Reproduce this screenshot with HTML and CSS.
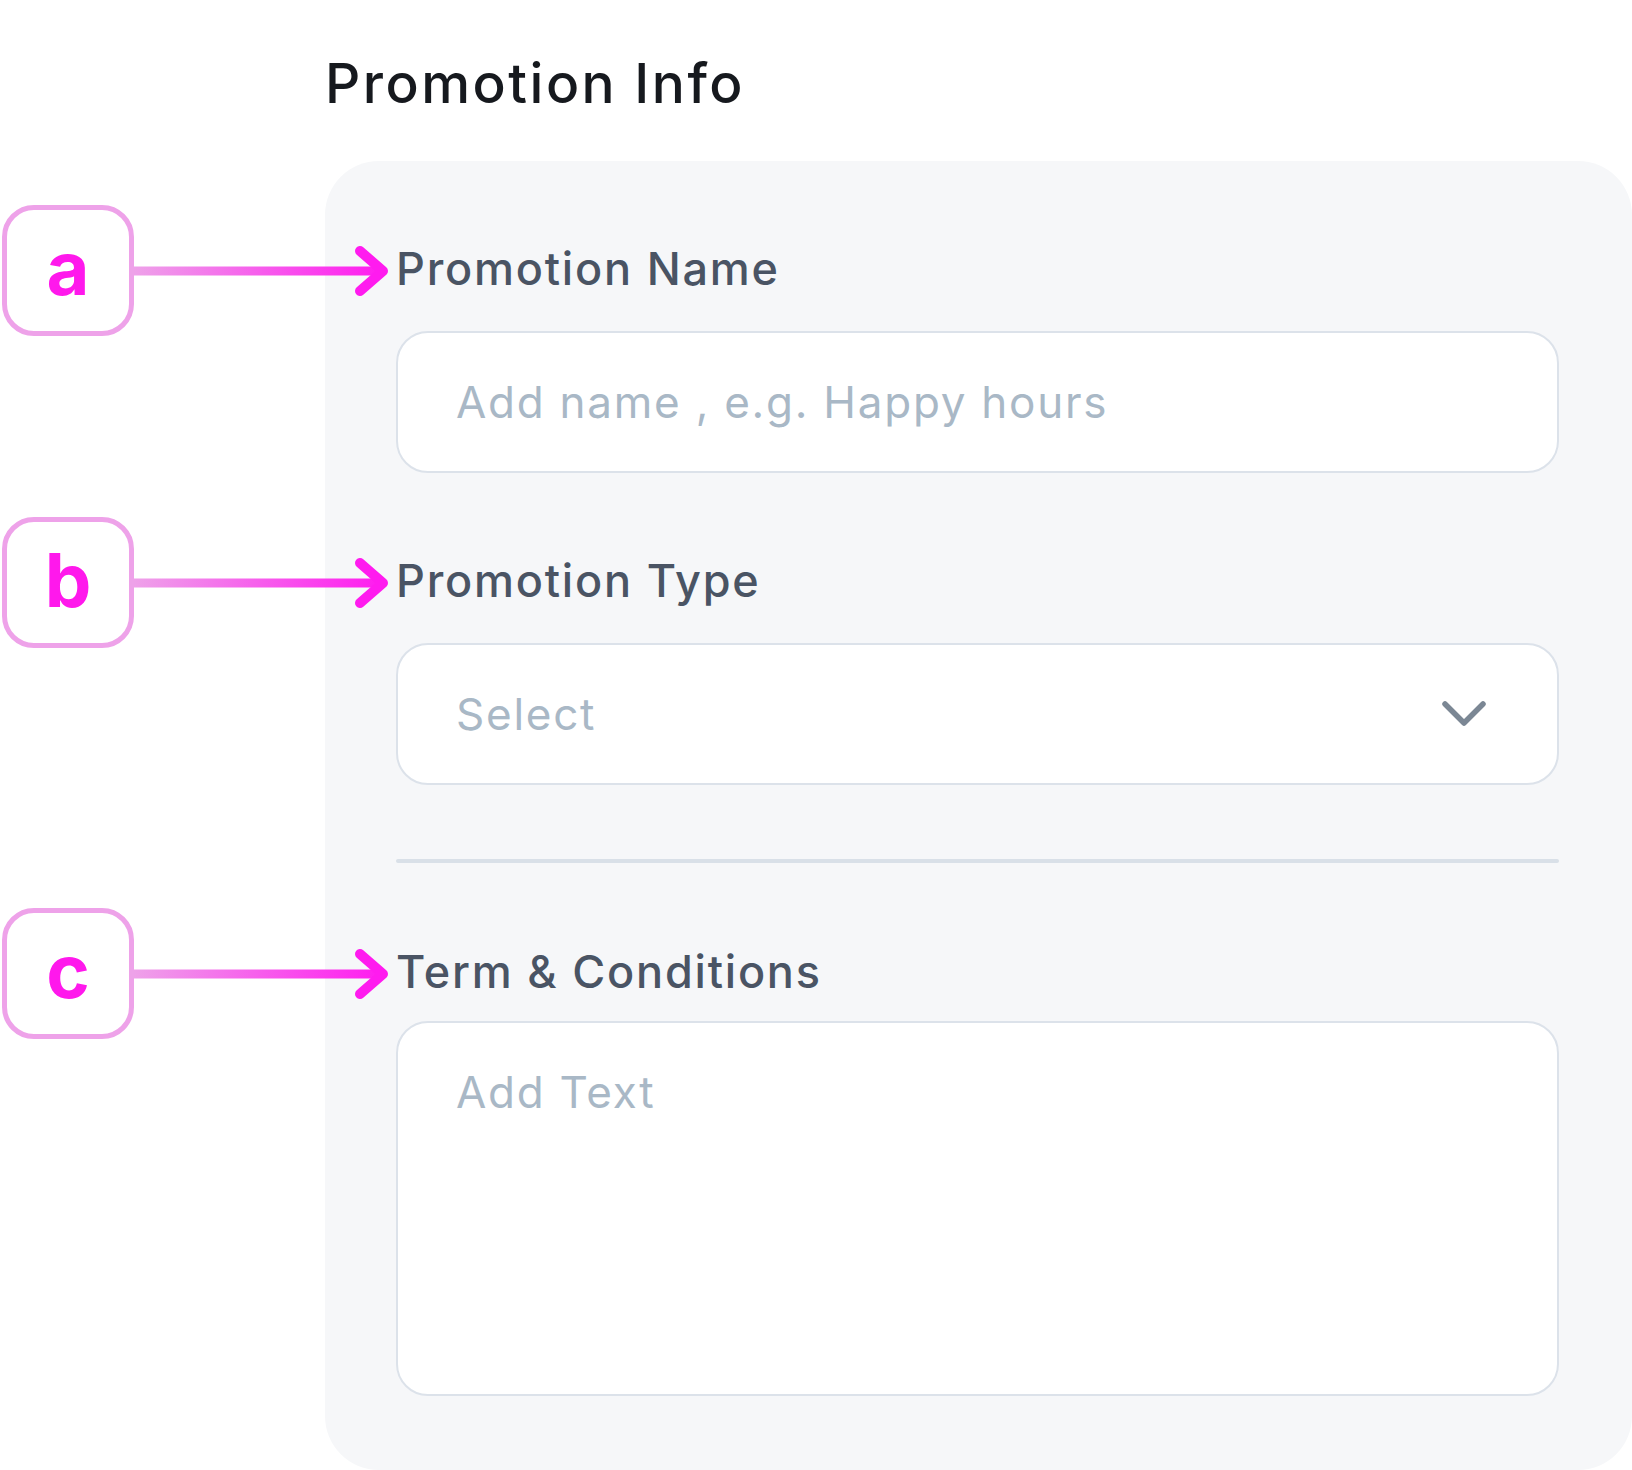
FILE: index.html
```html
<!DOCTYPE html>
<html lang="en">
<head>
<meta charset="utf-8">
<title>Promotion Info</title>
<link rel="stylesheet" href="styles.css">
</head>
<body>
<main class="page">
  <h1 class="title">Promotion Info</h1>
  <section class="panel">
    <div class="field">
      <div class="label-row">
        <div class="callout">
          <span class="callout-box">a</span>
          <svg class="callout-arrow" width="256" height="60" viewBox="0 0 256 60" aria-hidden="true">
            <defs>
              <linearGradient id="ga" gradientUnits="userSpaceOnUse" x1="0" y1="0" x2="250" y2="0">
                <stop offset="0" stop-color="#EEA2E9"/>
                <stop offset="1" stop-color="#FF1BEF"/>
              </linearGradient>
            </defs>
            <rect x="0" y="25.5" width="246" height="9" fill="url(#ga)"/>
            <polyline points="227,10 250,30 227,50" fill="none" stroke="#FF1BEF" stroke-width="10" stroke-linecap="round" stroke-linejoin="round"/>
          </svg>
        </div>
        <label class="label" for="pname">Promotion Name</label>
      </div>
      <input id="pname" class="control" type="text" placeholder="Add name , e.g. Happy hours">
    </div>

    <div class="field">
      <div class="label-row">
        <div class="callout">
          <span class="callout-box">b</span>
          <svg class="callout-arrow" width="256" height="60" viewBox="0 0 256 60" aria-hidden="true">
            <defs>
              <linearGradient id="gb" gradientUnits="userSpaceOnUse" x1="0" y1="0" x2="250" y2="0">
                <stop offset="0" stop-color="#EEA2E9"/>
                <stop offset="1" stop-color="#FF1BEF"/>
              </linearGradient>
            </defs>
            <rect x="0" y="25.5" width="246" height="9" fill="url(#gb)"/>
            <polyline points="227,10 250,30 227,50" fill="none" stroke="#FF1BEF" stroke-width="10" stroke-linecap="round" stroke-linejoin="round"/>
          </svg>
        </div>
        <span class="label">Promotion Type</span>
      </div>
      <div class="control select">
        <span class="placeholder">Select</span>
        <svg class="chevron" width="44" height="26" viewBox="0 0 44 26" aria-hidden="true">
          <polyline points="3,3 22,22 41,3" fill="none" stroke="#7B8794" stroke-width="5.5" stroke-linecap="round" stroke-linejoin="round"/>
        </svg>
      </div>
    </div>

    <hr class="divider">

    <div class="field field-terms">
      <div class="label-row">
        <div class="callout">
          <span class="callout-box">c</span>
          <svg class="callout-arrow" width="256" height="60" viewBox="0 0 256 60" aria-hidden="true">
            <defs>
              <linearGradient id="gc" gradientUnits="userSpaceOnUse" x1="0" y1="0" x2="250" y2="0">
                <stop offset="0" stop-color="#EEA2E9"/>
                <stop offset="1" stop-color="#FF1BEF"/>
              </linearGradient>
            </defs>
            <rect x="0" y="25.5" width="246" height="9" fill="url(#gc)"/>
            <polyline points="227,10 250,30 227,50" fill="none" stroke="#FF1BEF" stroke-width="10" stroke-linecap="round" stroke-linejoin="round"/>
          </svg>
        </div>
        <label class="label" for="terms">Term &amp; Conditions</label>
      </div>
      <textarea id="terms" class="control textarea" placeholder="Add Text"></textarea>
    </div>
  </section>
</main>
</body>
</html>
```

FILE: styles.css
```css
html, body {
  margin: 0;
  padding: 0;
  background: #ffffff;
}

body {
  font-family: Inter, "Noto Sans", sans-serif;
  width: 1632px;
  height: 1470px;
  overflow: hidden;
}

.page {
  padding-left: 325px;
  display: flex;
  flex-direction: column;
}

.title {
  margin: 50px 0 45px 0;
  font-size: 55px;
  line-height: 66px;
  font-weight: 500;
  color: #16191e;
  letter-spacing: 2.5px;
}

.panel {
  background: #f6f7f9;
  border-radius: 54px;
  height: 1309px;
  box-sizing: border-box;
  padding: 81px 73px 74px 71px;
  display: flex;
  flex-direction: column;
}

.field {
  display: flex;
  flex-direction: column;
  gap: 35px;
}

.field + .field {
  margin-top: 81px;
}

.field-terms {
  gap: 22px;
}

.label-row {
  position: relative;
  height: 54px;
}

.label {
  display: block;
  font-size: 45px;
  line-height: 54px;
  font-weight: 500;
  color: #4a5464;
  letter-spacing: 1.8px;
}

.callout {
  position: absolute;
  left: -394px;
  top: -37px;
  display: flex;
  align-items: center;
}

.callout-box {
  box-sizing: border-box;
  width: 132px;
  height: 131px;
  border: 5.5px solid #eea2e9;
  border-radius: 32px;
  background: #ffffff;
  display: flex;
  align-items: center;
  justify-content: center;
  font-size: 74px;
  font-weight: 700;
  color: #ff18ec;
  line-height: 1;
  padding-bottom: 6px;
}

.callout-arrow {
  display: block;
  margin-left: -1px;
}

.control {
  box-sizing: border-box;
  width: 100%;
  height: 142px;
  border: 2.5px solid #dce2ea;
  border-radius: 32px;
  background: #ffffff;
  padding: 0 58px;
  font-family: Inter, "Noto Sans", sans-serif;
  font-size: 44px;
  font-weight: 400;
  color: #4b5565;
  letter-spacing: 1.75px;
  outline: none;
}

.control::placeholder,
.placeholder {
  color: #a9b8c6;
  opacity: 1;
}

.select {
  display: flex;
  align-items: center;
  justify-content: space-between;
  padding-right: 71px;
}

.chevron {
  display: block;
}

.divider {
  border: 0;
  height: 5px;
  border-radius: 3px;
  background: #d9e0e8;
  margin: 74px 0 82px 0;
}

.textarea {
  height: 375px;
  padding: 42px 58px;
  line-height: 54px;
  resize: none;
  display: block;
}
```
